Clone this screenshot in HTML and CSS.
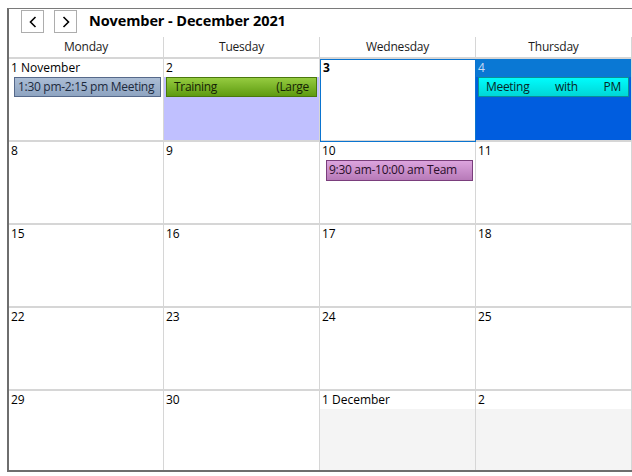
FILE: index.html
```html
<!DOCTYPE html>
<html>
<head>
<meta charset="utf-8">
<link rel="stylesheet" href="styles.css">
</head>
<body>
<div class="scheduler">
  <div class="toolbar">
    <button class="nav" aria-label="Previous"><svg width="8" height="12" viewBox="0 0 8 12"><polyline points="6.5,1 1.5,6 6.5,11" fill="none" stroke="#000" stroke-width="1.6"/></svg></button>
    <button class="nav" aria-label="Next"><svg width="8" height="12" viewBox="0 0 8 12"><polyline points="1.5,1 6.5,6 1.5,11" fill="none" stroke="#000" stroke-width="1.6"/></svg></button>
    <div class="title">November - December 2021</div>
  </div>
  <div class="dayheads">
    <div class="dayhead">Monday</div>
    <div class="dayhead">Tuesday</div>
    <div class="dayhead">Wednesday</div>
    <div class="dayhead">Thursday</div>
  </div>
  <div class="grid">
    <div class="cell">
      <div class="date">1 November</div>
      <div class="body"><div class="appt appt--steel appt--wide">1:30 pm-2:15 pm Meeting</div></div>
    </div>
    <div class="cell">
      <div class="date">2</div>
      <div class="body body--lavender"><div class="appt appt--green appt--split"><span>Training</span><span>(Large</span></div></div>
    </div>
    <div class="cell cell--selected">
      <div class="date date--bold">3</div>
      <div class="body"></div>
    </div>
    <div class="cell cell--blue">
      <div class="date date--light">4</div>
      <div class="body body--blue"><div class="appt appt--cyan appt--split"><span>Meeting</span><span>with</span><span>PM</span></div></div>
    </div>

    <div class="cell"><div class="date">8</div><div class="body"></div></div>
    <div class="cell"><div class="date">9</div><div class="body"></div></div>
    <div class="cell">
      <div class="date">10</div>
      <div class="body"><div class="appt appt--purple appt--wide2">9:30 am-10:00 am Team</div></div>
    </div>
    <div class="cell"><div class="date">11</div><div class="body"></div></div>

    <div class="cell"><div class="date">15</div><div class="body"></div></div>
    <div class="cell"><div class="date">16</div><div class="body"></div></div>
    <div class="cell"><div class="date">17</div><div class="body"></div></div>
    <div class="cell"><div class="date">18</div><div class="body"></div></div>

    <div class="cell"><div class="date">22</div><div class="body"></div></div>
    <div class="cell"><div class="date">23</div><div class="body"></div></div>
    <div class="cell"><div class="date">24</div><div class="body"></div></div>
    <div class="cell"><div class="date">25</div><div class="body"></div></div>

    <div class="cell cell--last"><div class="date">29</div><div class="body"></div></div>
    <div class="cell cell--last"><div class="date">30</div><div class="body"></div></div>
    <div class="cell cell--last"><div class="date">1 December</div><div class="body body--gray"></div></div>
    <div class="cell cell--last"><div class="date">2</div><div class="body body--gray"></div></div>
  </div>
</div>
</body>
</html>
```
FILE: styles.css
```css
html, body {
  margin: 0;
  padding: 0;
  background: #fff;
}
body {
  font-family: "Open Sans", "Noto Sans", sans-serif;
  font-size: 12px;
  color: #111;
}
.scheduler {
  margin: 8px 0 0 7px;
  border-top: 1px solid #7a7a7a;
  border-left: 2px solid #6e6e6e;
  border-bottom: 2px solid #6e6e6e;
  width: 623px;
}
.toolbar {
  height: 27px;
  display: flex;
  align-items: flex-start;
  padding-left: 12px;
}
.nav {
  width: 23px;
  height: 23px;
  margin-top: 1px;
  margin-right: 10px;
  padding: 0;
  border: 1px solid #adadad;
  background: #fff;
  display: flex;
  align-items: center;
  justify-content: center;
}
.nav + .nav {
  margin-right: 12px;
}
.nav svg {
  display: block;
}
.title {
  font-weight: 700;
  font-size: 14.5px;
  line-height: 24px;
  color: #000;
  letter-spacing: -0.1px;
}
.dayheads {
  display: grid;
  grid-template-columns: 155px 156px 156px 156px;
  height: 21px;
  border-bottom: 2px solid #d6d6d6;
}
.dayhead {
  margin-top: 1px;
  border-right: 1px solid #d6d6d6;
  text-align: center;
  line-height: 19px;
  color: #1c1c1c;
  letter-spacing: -0.2px;
}
.grid {
  display: grid;
  grid-template-columns: 155px 156px 156px 156px;
  grid-template-rows: repeat(4, 83px) 79px;
}
.cell {
  display: flex;
  flex-direction: column;
  border-right: 1px solid #d6d6d6;
  border-bottom: 2px solid #d6d6d6;
  min-width: 0;
}
.cell--last {
  border-bottom: none;
}
.cell--selected {
  outline: 1px solid #0a74d0;
  outline-offset: -1px;
}
.cell--blue {
  background: #0a78d4;
}
.date {
  height: 18px;
  line-height: 17px;
  padding-left: 2px;
  white-space: nowrap;
  color: #000;
}
.date--bold {
  font-weight: 700;
  padding-left: 3px;
}
.date--light {
  color: #c9dbf2;
}
.body {
  flex: 1;
  min-height: 0;
}
.body--lavender {
  background: #c0c0ff;
}
.body--blue {
  background: #005ddf;
}
.body--gray {
  background: #f4f4f4;
}
.appt {
  height: 18px;
  line-height: 18px;
  margin: 0 2px 0 2px;
  padding: 0 7px;
  border: 1px solid #555;
  overflow: hidden;
  white-space: nowrap;
  letter-spacing: -0.3px;
}
.appt--wide {
  margin-left: 5px;
  padding: 0 3px;
}
.appt--wide2 {
  margin-left: 6px;
  padding: 0 2px;
  height: 19px;
}
.appt--split {
  display: flex;
  justify-content: space-between;
}
.appt--steel {
  background: linear-gradient(#abbdd5, #8ea4c1);
  border-color: #56698a;
  color: #1d2a3d;
}
.appt--green {
  background: linear-gradient(#95cb40, #5e9b10);
  border-color: #4a780c;
  color: #152204;
}
.appt--cyan {
  background: linear-gradient(#00fcfc, #00d6d6);
  border-color: #0a8f96;
  color: #062828;
}
.appt--purple {
  background: linear-gradient(#dca4de, #b77ab8);
  border-color: #7a3e7c;
  color: #2a0e2a;
}
```
